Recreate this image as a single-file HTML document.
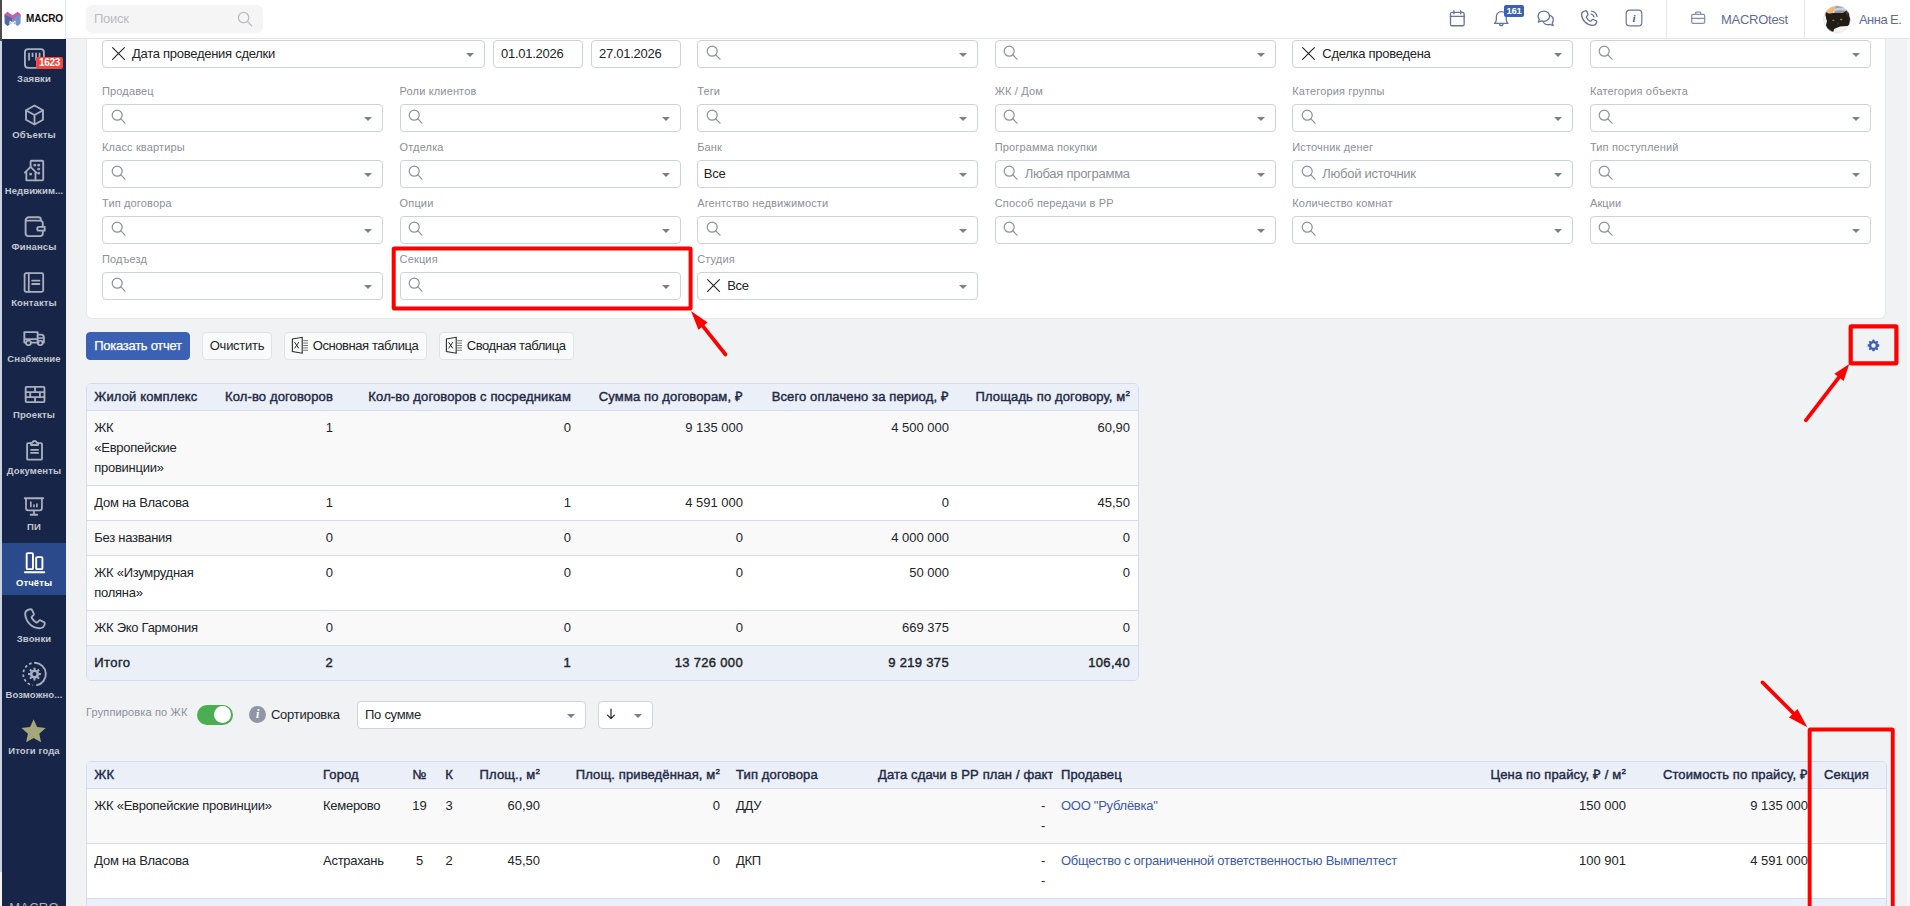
<!DOCTYPE html><html lang="ru"><head><meta charset="utf-8"><title>MACRO</title><style>
*{box-sizing:border-box;margin:0;padding:0}
html,body{width:1910px;height:906px;overflow:hidden}
body{position:relative;background:#f1f2f4;font-family:"Liberation Sans",sans-serif;font-size:13px;color:#212529;line-height:20px;letter-spacing:-0.27px}
.abs{position:absolute}
#lstrip{left:0;top:0;width:2px;height:906px;background:#c9d3e1}
#lstrip i{display:block;position:absolute;left:0;width:2px}
#hdr{left:2px;top:0;width:1908px;height:39px;background:#fff;border-bottom:1px solid #e4e6ea}
#logo{left:2px;top:0;width:64px;height:39px;background:#fff;border-right:1px solid #e4e6ea}
#side{left:2px;top:39px;width:64px;height:867px;background:#172648}
.si{position:absolute;left:0;width:64px;height:52px;text-align:center;color:#c3c7d1;font-size:9.5px;font-weight:bold;line-height:12px;letter-spacing:0.1px}
.si svg{overflow:visible;position:absolute;left:21px;top:8px;width:22px;height:22px;stroke:#a9afbf;fill:none;stroke-width:1.9;stroke-linecap:round;stroke-linejoin:round}
.si span{position:absolute;left:0;width:64px;top:34px;white-space:nowrap}
.si.act{background:#2b4a8b;color:#fff}
.si.act svg{stroke:#fff}
#search{left:86px;top:5px;width:177px;height:28px;background:#f5f5f5;border-radius:6px;color:#b9bcc2;font-size:13px;line-height:28px;padding-left:8px}
.hi{position:absolute;top:9px;width:19px;height:19px;stroke:#66759b;fill:none;stroke-width:1.4;stroke-linecap:round;stroke-linejoin:round}
.htx{position:absolute;top:0;height:39px;line-height:39px;font-size:13px;color:#5f6e95;white-space:nowrap}
#panel{left:86px;top:39px;width:1800px;height:280px;background:#fff;border:1px solid #e6e8ec;border-top:none;border-radius:0 0 6px 6px}
.sel{position:absolute;height:28px;background:#fff;border:1px solid #ced2d9;border-radius:4px;font-size:13px;line-height:25px;white-space:nowrap;color:#212529}
.sel .car{position:absolute;right:10px;top:12px;width:0;height:0;border-left:4px solid transparent;border-right:4px solid transparent;border-top:4px solid #7a808b}
.sel svg.mg{position:absolute;left:7.5px;top:4.3px;width:15px;height:15px;stroke:#8b909a;fill:none;stroke-width:1.2;stroke-linecap:round}
.sel svg.xx{position:absolute;left:9px;top:6px;width:13px;height:13px;stroke:#222;fill:none;stroke-width:1.1;stroke-linecap:round}
.sel .t{position:absolute;left:29px;top:0}
.sel .t.ph{color:#8b909a}
.lbl{position:absolute;font-size:11px;line-height:14px;color:#8b909a;white-space:nowrap;letter-spacing:0.15px}
.btn{position:absolute;top:332px;height:28px;border:1px solid #dfe2e7;border-radius:4px;background:#f9fafa;font-size:13px;line-height:26px;white-space:nowrap;color:#212529;text-align:center}
.btn.pr{background:#3a61b3;border-color:#3a61b3;color:#fff;-webkit-text-stroke:0.25px #fff}
table{border-collapse:separate;border-spacing:0;position:absolute;table-layout:fixed;font-size:13px;line-height:20px;color:#212529}
.tw{position:absolute;border:1px solid #d3ddf1;border-radius:5px;overflow:hidden;background:#fff}
.tw table{left:0;top:0;position:relative}
th,td{padding:0 8px;vertical-align:top;text-align:left;white-space:nowrap;overflow:hidden}
th{background:#ebeff8;font-weight:normal;-webkit-text-stroke:0.42px #1f2a44;color:#1f2a44;height:27px;line-height:26px;border-bottom:1px solid #d3ddf1;letter-spacing:0.13px}
td{border-bottom:1px solid #d3ddf1;padding-top:7px;padding-bottom:7px}
td:first-child,th:first-child{padding-left:7.3px}
tr.o td{background:#f9f9f9}
tr.tot td{background:#ebeff8;font-weight:normal;-webkit-text-stroke:0.42px #212529;border-bottom:none}
.r{text-align:right}
.c{text-align:center}
a{color:#3d5aa8;text-decoration:none}
.n{letter-spacing:0}
tr.tot td{letter-spacing:0.4px}
tr.tot td.n{letter-spacing:0.33px}
sup{font-size:8px;line-height:0;vertical-align:5px}
.red{position:absolute;border:4px solid #fe0000;border-radius:2px}

.bdg{position:absolute;left:34px;top:18px;width:27px;height:12px;background:#f4473a;border-radius:2px;color:#fff;font-size:10px;line-height:12px;font-weight:bold;letter-spacing:-0.3px;text-align:center}
#sfoot{left:0;top:859px;width:64px;text-align:center;color:#aeb4c0;font-size:13px;line-height:20px;letter-spacing:0.25px}
#ltx{left:24px;top:12px;font-size:10px;line-height:14px;font-weight:bold;color:#111;letter-spacing:-0.2px}
#hb161{left:1504px;top:5px;width:20px;height:12px;background:#3a61b3;border-radius:2px;color:#fff;font-size:9.5px;line-height:12px;font-weight:bold;text-align:center;letter-spacing:-0.3px}
#hinfo{left:1624px;top:8px;width:20px;height:20px;line-height:20px;text-align:center;font-family:"Liberation Serif",serif;font-style:italic;font-weight:bold;font-size:11px;color:#4d5d88}
.btn.ic{text-align:left}
.btn.ic span{position:absolute;left:27.7px;top:0;letter-spacing:-0.42px}
svg.xls{position:absolute;left:6px;top:3px;width:18px;height:18px;fill:none;stroke:#2a2a2a;stroke-width:1.1}
#info2{left:249px;top:706px;width:17px;height:17px;border-radius:9px;background:#9096a5;color:#fff;font-family:"Liberation Serif",serif;font-style:italic;font-weight:bold;font-size:12px;line-height:17px;text-align:center}
</style></head><body><div id="lstrip" class="abs"><i style="top:0;height:41px;background:#4b4b4b"></i><i style="top:872px;height:34px;background:#f3f3f3"></i></div><div id="hdr" class="abs"></div><div id="logo" class="abs"><svg class="abs" style="left:2px;top:11px" width="18" height="16" viewBox="0 0 18 16"><path d="M0.6 3.2L3.4 0.8 8.6 4.2 13.6 0.8 16.6 3.2 16.6 6 8.6 8.6 0.6 6z" fill="#c95fa8"/><path d="M0.6 3.4L8.6 7.6V11.4L5.8 9.6 5.4 14 3.4 15 0.6 12.6z" fill="#52689e"/><path d="M16.6 3.4L8.6 7.6V11.4L11.6 9.6 12 14 13.8 15 16.6 12.6z" fill="#7393cf"/><path d="M5.6 10.2L8.2 12.4 5.4 13.6z" fill="#c9c9c9"/><path d="M11.8 10.2L9.2 12.4 12 13.6z" fill="#b5b5b5"/></svg><span class="abs" id="ltx">MACRO</span></div><div id="search" class="abs">Поиск<svg class="abs" style="left:151px;top:5.5px;fill:none;stroke:#b9bcc2;stroke-width:1.3;stroke-linecap:round" width="16" height="16" viewBox="0 0 16 16"><circle cx="6.6" cy="6.6" r="5.2"/><path d="M10.6 10.6L14.6 14.8"/></svg></div><svg class="hi" style="left:1448px" viewBox="0 0 20 20"><rect x="2.6" y="3.6" width="14.4" height="14" rx="1.6"/><path d="M2.6 7.8h14.4M6.2 1.8v3.2M13.4 1.8v3.2"/></svg><svg class="hi" style="left:1492px" viewBox="0 0 20 20"><path d="M2.6 15.2h14.2c-1.2-1.2-1.8-2.4-1.8-4.2V8.2c0-3-2.2-5.4-5.2-5.4S4.6 5.2 4.6 8.2V11c0 1.8-.7 3-2 4.2zM8 15.4c0 1.2.8 2 1.8 2s1.8-.8 1.8-2"/></svg><div class="abs" id="hb161">161</div><svg class="hi" style="left:1536px" viewBox="0 0 20 20"><path d="M8.2 2.2c3.4 0 6 2.4 6 5.4s-2.6 5.4-6 5.4c-.9 0-1.7-.2-2.5-.5L2.4 13.8l1-2.8c-.8-.9-1.2-2-1.2-3.4 0-3 2.6-5.4 6-5.4z"/><path d="M14.2 6.8c2.4.6 4 2.6 4 4.8 0 1.2-.4 2.2-1.1 3.1l.9 2.7-3.1-1.2c-.7.3-1.5.4-2.3.4-2 0-3.7-.9-4.6-2.4"/></svg><svg class="hi" style="left:1580px" viewBox="0 0 20 20"><path d="M5.6 1.9c.6-.2 1.2.1 1.5.6l1.3 2.6c.3.5.1 1.2-.3 1.6L7 7.8c-.3.3-.4.8-.2 1.2.8 1.6 2.1 2.9 3.7 3.7.4.2.9.1 1.2-.2l1.1-1.1c.4-.4 1.1-.6 1.6-.3l2.6 1.3c.5.3.8.9.6 1.5-.5 2-2.2 3.4-4.3 3.3C7 16.9 2 11.9 1.7 5.8 1.6 3.9 3.4 2.4 5.6 1.9z"/><path d="M11.8 5.4c1.5.3 2.6 1.4 2.9 2.9M12.2 2.2c3 .5 5.2 2.7 5.7 5.7"/></svg><svg class="hi" style="left:1624px;top:8px;width:20px;height:20px;stroke-width:1.2" viewBox="0 0 20 20"><rect x="2.2" y="2.2" width="15.6" height="15.6" rx="3.4"/></svg><span class="abs" id="hinfo">i</span><div class="abs" style="left:1666px;top:0;width:1px;height:39px;background:#e4e6ea"></div><svg class="hi" style="left:1689px;top:9px;width:18px;height:18px;stroke:#8490b0" viewBox="0 0 20 20"><rect x="3" y="6" width="14.4" height="10" rx="1.6"/><path d="M7.4 6V4.4c0-.6.4-1 1-1h3.6c.6 0 1 .4 1 1V6M3 10.4h14.4M9 10.6h2.4"/></svg><span class="htx" style="left:1721px">MACROtest</span><div class="abs" style="left:1804px;top:0;width:1px;height:39px;background:#e4e6ea"></div><svg class="abs" style="left:1823px;top:5px" width="28" height="28" viewBox="0 0 28 28"><defs><clipPath id="avc"><circle cx="14" cy="14.2" r="13.4"/></clipPath><filter id="avb" x="-10%" y="-10%" width="120%" height="120%"><feGaussianBlur stdDeviation="0.55"/></filter></defs><g clip-path="url(#avc)"><rect width="28" height="28" fill="#f1efeb"/><g filter="url(#avb)"><path d="M0 0h15l-3 3-2 5H0z" fill="#efb678"/><path d="M14 0h14v10l-5-2-12 1 1-6z" fill="#8f99a4"/><path d="M12 3.5c4-1.5 9-1.5 12 .5l-1 2c-4-1-8-1-11 0z" fill="#c9d0d8"/><path d="M2.5 7l3.5 1.5 4 -.5 10 0 3.5-2.5 2.5 1 .5 5 1.5 3-1 5-4 2.5-6 1.5-5 2-2.5 3.5-5-3.5-1.5-5.5 1-4-1.5-4z" fill="#241c19"/><path d="M22.5 6.5l2.2-.6.6 4.6-1.5-.5z" fill="#5b3526"/><ellipse cx="10.3" cy="15.4" rx="1.2" ry="0.8" fill="#8a6d35"/><ellipse cx="18.2" cy="14.6" rx="1.3" ry="0.8" fill="#9a8450"/><ellipse cx="14.8" cy="18.8" rx="0.9" ry="0.6" fill="#5a4a45"/><path d="M11 24l6-2.5 7-.5 4 2v6H10z" fill="#f6f4f0"/><path d="M0 11l3 .5 0 6-3 2z" fill="#f6f4f0"/></g></g><circle cx="14" cy="14.2" r="13.4" fill="none" stroke="#e3e3e3" stroke-width="0.6"/></svg><span class="htx" style="left:1859px;letter-spacing:-0.55px">Анна Е.</span><div id="side" class="abs"><div class="si" style="top:0px"><svg viewBox="0 0 22 22"><g transform="matrix(0.977 0 0 0.97 0.17 0.804)"><rect x="1.8" y="1.3" width="19.4" height="19.4" rx="3.2"/><path d="M6 5v8M9.6 5v4.5M13.2 5v8M16.8 5v5.5" stroke-width="1.8" stroke-linecap="butt"/></g></svg><span>Заявки</span><b class="bdg">1623</b></div><div class="si" style="top:56px"><svg viewBox="0 0 22 22"><g transform="matrix(0.975 0 0 0.96 0.775 0.94)"><path d="M11 1.6l8.7 5v9.8l-8.7 5-8.7-5V6.6z"/><path d="M2.5 6.8L11 11.6l8.5-4.8M11 11.6V21"/></g></svg><span>Объекты</span></div><div class="si" style="top:112px"><svg viewBox="0 0 22 22"><g transform="matrix(0.971 0 0 0.986 0.611 0.214)"><path d="M7.2 7.5V2.6c0-.6.4-1 1-1h11c.6 0 1 .4 1 1v17.8c0 .6-.4 1-1 1H2.8V13"/><path d="M1.3 13.6l5.9-5.9 5.9 5.9M12.2 12.8v8.6"/><path d="M10.9 5.2h1.6v1.6h-1.6zM14.9 5.2h1.6v1.6h-1.6zM14.9 9.2h1.6v1.6h-1.6zM14.9 13.4h1.6v1.6h-1.6zM6.6 14.3h1.6v1.6H6.6z" fill="#a9afbf" stroke-width="0.9"/></g></svg><span>Недвижим...</span></div><div class="si" style="top:168px"><svg viewBox="0 0 22 22"><g transform="matrix(1 0 0 1 0 1.0)"><path d="M2.6 4.6v12.7a2.8 2.8 0 0 0 2.8 2.8h11.6a2.8 2.8 0 0 0 2.8-2.8v-2.6M19.8 10.8V7.4a2.8 2.8 0 0 0-2.8-2.8H2.6a3.3 3.3 0 0 1 3.3-3.3h9.6a2.4 2.4 0 0 1 2.4 2.4v1"/><path d="M21.7 10.85h-5.6a1.9 1.9 0 0 0 0 3.8h5.6z"/></g></svg><span>Финансы</span></div><div class="si" style="top:224px"><svg viewBox="0 0 22 22"><g transform="matrix(0.949 0 0 0.967 0.273 0.779)"><rect x="1.4" y="1.4" width="19.6" height="19.4" rx="1.6"/><path d="M5.8 1.6v19M9.4 9.2h7.6M9.4 12.6h7.6"/></g></svg><span>Контакты</span></div><div class="si" style="top:280px"><svg viewBox="0 0 22 22"><g transform="matrix(1.005 0 0 0.906 -0.255 1.581)"><path d="M1.6 4h13.2v11.4H8.2M1.6 4v11.4h1.6M14.8 6.6h3.4c1.6 0 2.8 1.4 2.8 3v5.8h-1.2M14.8 15.4h1M2 11.6h12.6M14.8 10.4h6"/><circle cx="5.7" cy="15.8" r="2.4"/><circle cx="17.4" cy="15.8" r="2.4"/></g></svg><span>Снабжение</span></div><div class="si" style="top:336px"><svg viewBox="0 0 22 22"><g transform="matrix(0.967 0 0 0.92 1.138 1.594)"><rect x="1.6" y="2.6" width="19.4" height="16.4" rx="0.8"/><path d="M1.6 8.1h19.4M1.6 13.5h19.4M11.3 2.6v5.5M11.3 13.5v5.5M6.3 8.1v5.4M16.3 8.1v5.4"/></g></svg><span>Проекты</span></div><div class="si" style="top:392px"><svg viewBox="0 0 22 22"><g transform="matrix(0.977 0 0 0.965 0.807 0.624)"><path d="M7.2 3.6H4.4c-.6 0-1 .4-1 1v15.2c0 .6.4 1 1 1h13.2c.6 0 1-.4 1-1V4.6c0-.6-.4-1-1-1h-2.8"/><path d="M7.4 5.6V3.4h1.4c.2-1.2 1-2 2.2-2s2 .8 2.2 2h1.4v2.2z"/><path d="M7.4 10.6h7.2M7.4 13.8h7.2"/></g></svg><span>Документы</span></div><div class="si" style="top:448px"><svg viewBox="0 0 22 22"><g transform="matrix(0.925 0 0 0.989 0.78 0.919)"><path d="M1 2.4h20M2.4 2.4v9.8c0 1.4 1 2.4 2.4 2.4h12.4c1.4 0 2.4-1 2.4-2.4V2.4M11 14.6v4.2M7.4 19h7.2"/><path d="M7.6 6.4v4.4M11 9.4v1.4M14.2 8.2v2.6" stroke-width="1.8"/></g></svg><span>ПИ</span></div><div class="si act" style="top:504px"><svg viewBox="0 0 22 22"><g transform="matrix(1.009 0 0 0.988 0.449 0.953)"><rect x="3.2" y="1.2" width="6.2" height="16.2" rx="1"/><rect x="12.6" y="5.2" width="6.2" height="12.2" rx="1"/><path d="M1.4 20.6h19.2"/></g></svg><span>Отчёты</span></div><div class="si" style="top:560px"><svg viewBox="0 0 22 22"><g transform="matrix(0.99 0 0 1.008 0.618 0.882)"><path d="M6.6 1.4c.8-.3 1.5.1 1.9.8l1.7 3.3c.3.7.1 1.4-.4 1.9L8.5 8.6c-.4.4-.5 1-.2 1.5 1 1.9 2.4 3.3 4.3 4.3.5.3 1.1.2 1.5-.2l1.2-1.3c.5-.5 1.2-.7 1.9-.4l3.3 1.7c.7.4 1.1 1.1.8 1.9-.6 2.4-2.8 4.2-5.4 4.1C8.3 20 1.8 13.5 1.6 5.9 1.5 3.6 3.8 1.9 6.6 1.4z"/></g></svg><span>Звонки</span></div><div class="si" style="top:616px"><svg viewBox="0 0 22 22"><path d="M11.9 -0.2A11.3 11.3 0 0 1 13.85 22.15" stroke-width="1.9"/><path d="M8.58 0.19A11.3 11.3 0 0 0 9.54 22.23" stroke-dasharray="2.7 2.3" stroke-width="1.7" stroke-linecap="butt"/><path d="M15.97 10.03 L17.92 10.08 L17.92 12.12 L15.97 12.17 L15.42 13.50 L16.76 14.92 L15.32 16.36 L13.90 15.02 L12.57 15.57 L12.52 17.52 L10.48 17.52 L10.43 15.57 L9.10 15.02 L7.68 16.36 L6.24 14.92 L7.58 13.50 L7.03 12.17 L5.08 12.12 L5.08 10.08 L7.03 10.03 L7.58 8.70 L6.24 7.28 L7.68 5.84 L9.10 7.18 L10.43 6.63 L10.48 4.68 L12.52 4.68 L12.57 6.63 L13.90 7.18 L15.32 5.84 L16.76 7.28 L15.42 8.70z M13.50 11.10a2.0 2.0 0 1 0 -4.0 0a2.0 2.0 0 1 0 4.0 0z" fill="#a9afbf" fill-rule="evenodd" stroke="none"/></svg><span>Возможно...</span></div><div class="si" style="top:672px"><svg viewBox="0 0 22 22"><path d="M10.60 0.20 L14.11 8.08 L22.70 8.99 L16.29 14.77 L18.08 23.21 L10.60 18.90 L3.12 23.21 L4.91 14.77 L-1.50 8.99 L7.09 8.08z" fill="#a5a77b" stroke="none"/></svg><span>Итоги года</span></div><div class="abs" id="sfoot">MACRO</div></div><div id="panel" class="abs"></div><div class="sel" style="left:102px;top:40px;width:382.5px"><svg class="xx" viewBox="0 0 13 13"><path d="M0.6 0.6L12.4 12.4M12.4 0.6L0.6 12.4"/></svg><span class="t">Дата проведения сделки</span><i class="car"></i></div><div class="sel" style="left:493px;top:40px;width:89.5px"><span class="t dt" style="left:7px">01.01.2026</span></div><div class="sel" style="left:591px;top:40px;width:89.5px"><span class="t dt" style="left:7px">27.01.2026</span></div><div class="sel" style="left:697.16px;top:40px;width:281px"><svg class="mg" viewBox="0 0 15 15"><circle cx="6.2" cy="6.2" r="5"/><path d="M9.9 9.9L14 14.2"/></svg><i class="car"></i></div><div class="sel" style="left:994.74px;top:40px;width:281px"><svg class="mg" viewBox="0 0 15 15"><circle cx="6.2" cy="6.2" r="5"/><path d="M9.9 9.9L14 14.2"/></svg><i class="car"></i></div><div class="sel" style="left:1292.3px;top:40px;width:281px"><svg class="xx" viewBox="0 0 13 13"><path d="M0.6 0.6L12.4 12.4M12.4 0.6L0.6 12.4"/></svg><span class="t">Сделка проведена</span><i class="car"></i></div><div class="sel" style="left:1589.9px;top:40px;width:281px"><svg class="mg" viewBox="0 0 15 15"><circle cx="6.2" cy="6.2" r="5"/><path d="M9.9 9.9L14 14.2"/></svg><i class="car"></i></div><div class="lbl" style="left:102px;top:84px">Продавец</div><div class="sel" style="left:102px;top:104px;width:281px"><svg class="mg" viewBox="0 0 15 15"><circle cx="6.2" cy="6.2" r="5"/><path d="M9.9 9.9L14 14.2"/></svg><i class="car"></i></div><div class="lbl" style="left:399.58px;top:84px">Роли клиентов</div><div class="sel" style="left:399.58px;top:104px;width:281px"><svg class="mg" viewBox="0 0 15 15"><circle cx="6.2" cy="6.2" r="5"/><path d="M9.9 9.9L14 14.2"/></svg><i class="car"></i></div><div class="lbl" style="left:697.16px;top:84px">Теги</div><div class="sel" style="left:697.16px;top:104px;width:281px"><svg class="mg" viewBox="0 0 15 15"><circle cx="6.2" cy="6.2" r="5"/><path d="M9.9 9.9L14 14.2"/></svg><i class="car"></i></div><div class="lbl" style="left:994.74px;top:84px">ЖК / Дом</div><div class="sel" style="left:994.74px;top:104px;width:281px"><svg class="mg" viewBox="0 0 15 15"><circle cx="6.2" cy="6.2" r="5"/><path d="M9.9 9.9L14 14.2"/></svg><i class="car"></i></div><div class="lbl" style="left:1292.3px;top:84px">Категория группы</div><div class="sel" style="left:1292.3px;top:104px;width:281px"><svg class="mg" viewBox="0 0 15 15"><circle cx="6.2" cy="6.2" r="5"/><path d="M9.9 9.9L14 14.2"/></svg><i class="car"></i></div><div class="lbl" style="left:1589.9px;top:84px">Категория объекта</div><div class="sel" style="left:1589.9px;top:104px;width:281px"><svg class="mg" viewBox="0 0 15 15"><circle cx="6.2" cy="6.2" r="5"/><path d="M9.9 9.9L14 14.2"/></svg><i class="car"></i></div><div class="lbl" style="left:102px;top:140px">Класс квартиры</div><div class="sel" style="left:102px;top:160px;width:281px"><svg class="mg" viewBox="0 0 15 15"><circle cx="6.2" cy="6.2" r="5"/><path d="M9.9 9.9L14 14.2"/></svg><i class="car"></i></div><div class="lbl" style="left:399.58px;top:140px">Отделка</div><div class="sel" style="left:399.58px;top:160px;width:281px"><svg class="mg" viewBox="0 0 15 15"><circle cx="6.2" cy="6.2" r="5"/><path d="M9.9 9.9L14 14.2"/></svg><i class="car"></i></div><div class="lbl" style="left:697.16px;top:140px">Банк</div><div class="sel" style="left:697.16px;top:160px;width:281px"><span class="t" style="left:5.7px">Все</span><i class="car"></i></div><div class="lbl" style="left:994.74px;top:140px">Программа покупки</div><div class="sel" style="left:994.74px;top:160px;width:281px"><svg class="mg" viewBox="0 0 15 15"><circle cx="6.2" cy="6.2" r="5"/><path d="M9.9 9.9L14 14.2"/></svg><span class="t ph">Любая программа</span><i class="car"></i></div><div class="lbl" style="left:1292.3px;top:140px">Источник денег</div><div class="sel" style="left:1292.3px;top:160px;width:281px"><svg class="mg" viewBox="0 0 15 15"><circle cx="6.2" cy="6.2" r="5"/><path d="M9.9 9.9L14 14.2"/></svg><span class="t ph">Любой источник</span><i class="car"></i></div><div class="lbl" style="left:1589.9px;top:140px">Тип поступлений</div><div class="sel" style="left:1589.9px;top:160px;width:281px"><svg class="mg" viewBox="0 0 15 15"><circle cx="6.2" cy="6.2" r="5"/><path d="M9.9 9.9L14 14.2"/></svg><i class="car"></i></div><div class="lbl" style="left:102px;top:196px">Тип договора</div><div class="sel" style="left:102px;top:216px;width:281px"><svg class="mg" viewBox="0 0 15 15"><circle cx="6.2" cy="6.2" r="5"/><path d="M9.9 9.9L14 14.2"/></svg><i class="car"></i></div><div class="lbl" style="left:399.58px;top:196px">Опции</div><div class="sel" style="left:399.58px;top:216px;width:281px"><svg class="mg" viewBox="0 0 15 15"><circle cx="6.2" cy="6.2" r="5"/><path d="M9.9 9.9L14 14.2"/></svg><i class="car"></i></div><div class="lbl" style="left:697.16px;top:196px">Агентство недвижимости</div><div class="sel" style="left:697.16px;top:216px;width:281px"><svg class="mg" viewBox="0 0 15 15"><circle cx="6.2" cy="6.2" r="5"/><path d="M9.9 9.9L14 14.2"/></svg><i class="car"></i></div><div class="lbl" style="left:994.74px;top:196px">Способ передачи в РР</div><div class="sel" style="left:994.74px;top:216px;width:281px"><svg class="mg" viewBox="0 0 15 15"><circle cx="6.2" cy="6.2" r="5"/><path d="M9.9 9.9L14 14.2"/></svg><i class="car"></i></div><div class="lbl" style="left:1292.3px;top:196px">Количество комнат</div><div class="sel" style="left:1292.3px;top:216px;width:281px"><svg class="mg" viewBox="0 0 15 15"><circle cx="6.2" cy="6.2" r="5"/><path d="M9.9 9.9L14 14.2"/></svg><i class="car"></i></div><div class="lbl" style="left:1589.9px;top:196px">Акции</div><div class="sel" style="left:1589.9px;top:216px;width:281px"><svg class="mg" viewBox="0 0 15 15"><circle cx="6.2" cy="6.2" r="5"/><path d="M9.9 9.9L14 14.2"/></svg><i class="car"></i></div><div class="lbl" style="left:102px;top:252px">Подъезд</div><div class="sel" style="left:102px;top:272px;width:281px"><svg class="mg" viewBox="0 0 15 15"><circle cx="6.2" cy="6.2" r="5"/><path d="M9.9 9.9L14 14.2"/></svg><i class="car"></i></div><div class="lbl" style="left:399.58px;top:252px">Секция</div><div class="sel" style="left:399.58px;top:272px;width:281px"><svg class="mg" viewBox="0 0 15 15"><circle cx="6.2" cy="6.2" r="5"/><path d="M9.9 9.9L14 14.2"/></svg><i class="car"></i></div><div class="lbl" style="left:697.16px;top:252px">Студия</div><div class="sel" style="left:697.16px;top:272px;width:281px"><svg class="xx" viewBox="0 0 13 13"><path d="M0.6 0.6L12.4 12.4M12.4 0.6L0.6 12.4"/></svg><span class="t">Все</span><i class="car"></i></div><div class="btn pr" style="left:86px;width:104px">Показать отчет</div><div class="btn" style="left:202px;width:70px">Очистить</div><div class="btn ic" style="left:284px;width:143px"><svg class="xls" viewBox="0 0 18 18"><path d="M1.4 3L11.2 1.3V17.2L1.4 15.5z" stroke-width="1.1"/><path d="M3.6 6.2l4.2 6.2M7.8 6.2l-4.2 6.2" stroke-width="1"/><path d="M12.2 4.7h4.8M12.2 7.1h4.8M12.2 9.5h4.8M12.2 11.9h4.8M12.2 14.3h4.8" stroke-width="0.9" stroke="#666"/></svg><span>Основная таблица</span></div><div class="btn ic" style="left:439px;width:135px"><div style="position:absolute;left:-1px;top:0"><svg class="xls" viewBox="0 0 18 18"><path d="M1.4 3L11.2 1.3V17.2L1.4 15.5z" stroke-width="1.1"/><path d="M3.6 6.2l4.2 6.2M7.8 6.2l-4.2 6.2" stroke-width="1"/><path d="M12.2 4.7h4.8M12.2 7.1h4.8M12.2 9.5h4.8M12.2 11.9h4.8M12.2 14.3h4.8" stroke-width="0.9" stroke="#666"/></svg><span>Сводная таблица</span></div></div><svg class="abs" style="left:1866.6px;top:338.7px" width="13" height="13" viewBox="0 0 14 14"><path d="M7 0.6l1.1.1.4 1.6 1 .4 1.4-.9 1.3 1.3-.9 1.4.4 1 1.6.4v2.2l-1.6.4-.4 1 .9 1.4-1.3 1.3-1.4-.9-1 .4-.4 1.6H5.9l-.4-1.6-1-.4-1.4.9-1.3-1.3.9-1.4-.4-1L.7 8.1V5.9l1.6-.4.4-1-.9-1.4 1.3-1.3 1.4.9 1-.4.4-1.6zM7 4.6a2.4 2.4 0 1 0 0 4.8 2.4 2.4 0 0 0 0-4.8z" fill="#3a61b3" fill-rule="evenodd"/></svg><div class="tw" style="left:86px;top:383px;width:1053px;height:298px"><table style="width:1051px"><colgroup><col style="width:120px"><col style="width:134px"><col style="width:238px"><col style="width:172px"><col style="width:206px"><col style="width:181px"></colgroup><tr><th>Жилой комплекс</th><th class="r">Кол-во договоров</th><th class="r">Кол-во договоров с посредникам</th><th class="r">Сумма по договорам, ₽</th><th class="r">Всего оплачено за период, ₽</th><th class="r">Площадь по договору, м<sup>2</sup></th></tr><tr class="o"><td>ЖК<br>«Европейские<br>провинции»</td><td class="r n">1</td><td class="r n">0</td><td class="r n">9 135 000</td><td class="r n">4 500 000</td><td class="r n">60,90</td></tr><tr><td>Дом на Власова</td><td class="r n">1</td><td class="r n">1</td><td class="r n">4 591 000</td><td class="r n">0</td><td class="r n">45,50</td></tr><tr class="o"><td>Без названия</td><td class="r n">0</td><td class="r n">0</td><td class="r n">0</td><td class="r n">4 000 000</td><td class="r n">0</td></tr><tr><td>ЖК «Изумрудная<br>поляна»</td><td class="r n">0</td><td class="r n">0</td><td class="r n">0</td><td class="r n">50 000</td><td class="r n">0</td></tr><tr class="o"><td>ЖК Эко Гармония</td><td class="r n">0</td><td class="r n">0</td><td class="r n">0</td><td class="r n">669 375</td><td class="r n">0</td></tr><tr class="tot"><td>Итого</td><td class="r n">2</td><td class="r n">1</td><td class="r n">13 726 000</td><td class="r n">9 219 375</td><td class="r n">106,40</td></tr></table></div><div class="lbl" style="left:86px;top:705px">Группировка по ЖК</div><div class="abs" style="left:197px;top:704.5px;width:36px;height:20.5px;border-radius:11px;background:#4cae52"><i class="abs" style="left:17px;top:1.75px;width:17px;height:17px;border-radius:9px;background:#fff"></i></div><div class="abs" id="info2">i</div><div class="abs" style="left:271px;top:705px;font-size:13px;line-height:20px;white-space:nowrap" id="sortl">Сортировка</div><div class="sel" style="left:357px;top:701px;width:228.5px"><span class="t" style="left:7px">По сумме</span><i class="car"></i></div><div class="sel" style="left:598px;top:701px;width:54.5px"><svg class="abs" style="left:7px;top:6px;fill:none;stroke:#222;stroke-width:1.2;stroke-linecap:round;stroke-linejoin:round" width="10" height="12" viewBox="0 0 10 12"><path d="M5 1v9.6M1.6 7.2L5 10.6 8.4 7.2"/></svg><i class="car"></i></div><div class="tw" style="left:86px;top:761px;width:1801px;height:160px;border-radius:5px 5px 0 0"><table style="width:1799px"><colgroup><col style="width:228px"><col style="width:89px"><col style="width:31px"><col style="width:28px"><col style="width:85px"><col style="width:180px"><col style="width:142px"><col style="width:183px"><col style="width:397px"><col style="width:184px"><col style="width:182px"><col style="width:70px"></colgroup><tr><th>ЖК</th><th>Город</th><th class="c">№</th><th class="c">К</th><th class="r">Площ., м<sup>2</sup></th><th class="r">Площ. приведённая, м<sup>2</sup></th><th>Тип договора</th><th class="r">Дата сдачи в РР план / факт</th><th>Продавец</th><th class="r">Цена по прайсу, ₽ / м<sup>2</sup></th><th class="r ov">Стоимость по прайсу, ₽</th><th>Секция</th></tr><tr class="o"><td>ЖК «Европейские провинции»</td><td>Кемерово</td><td class="c n">19</td><td class="c n">3</td><td class="r n">60,90</td><td class="r n">0</td><td>ДДУ</td><td class="r">-<br>-</td><td><a>ООО "Рублёвка"</a></td><td class="r n">150 000</td><td class="r n ov">9 135 000</td><td></td></tr><tr><td>Дом на Власова</td><td>Астрахань</td><td class="c n">5</td><td class="c n">2</td><td class="r n">45,50</td><td class="r n">0</td><td>ДКП</td><td class="r">-<br>-</td><td><a>Общество с ограниченной ответственностью Вымпелтест</a></td><td class="r n">100 901</td><td class="r n ov">4 591 000</td><td></td></tr><tr class="tot"><td colspan="12" style="height:30px">&nbsp;</td></tr></table></div><svg class="abs" style="left:0;top:0;pointer-events:none" width="1910" height="906" viewBox="0 0 1910 906"><g fill="none" stroke="#fe0000" stroke-linejoin="round"><rect x="393.7" y="248.5" width="296.9" height="60" stroke-width="4" rx="0.8"/><rect x="1850.7" y="326.4" width="45.7" height="36.9" stroke-width="4.2" rx="0.8"/><rect x="1809.65" y="729.45" width="83.1" height="200" stroke-width="3.9" rx="0.8"/></g><line x1="725.5" y1="354.5" x2="701.1" y2="323.8" stroke="#fe0000" stroke-width="3.7" stroke-linecap="round"/><polygon points="691.0,311.0 707.6,322.5 698.4,329.8" fill="#fe0000"/><line x1="1805.8" y1="420.4" x2="1840.8" y2="374.9" stroke="#fe0000" stroke-width="3.7" stroke-linecap="round"/><polygon points="1849.3,363.9 1843.6,380.9 1834.4,373.7" fill="#fe0000"/><line x1="1762.5" y1="682.4" x2="1795.4" y2="715.3" stroke="#fe0000" stroke-width="3.7" stroke-linecap="round"/><polygon points="1807.3,727.3 1789.0,717.5 1797.5,709.0" fill="#fe0000"/></svg><div class="abs" style="left:1907px;top:39px;width:3px;height:867px;background:#f7f8f9"></div></body></html>
